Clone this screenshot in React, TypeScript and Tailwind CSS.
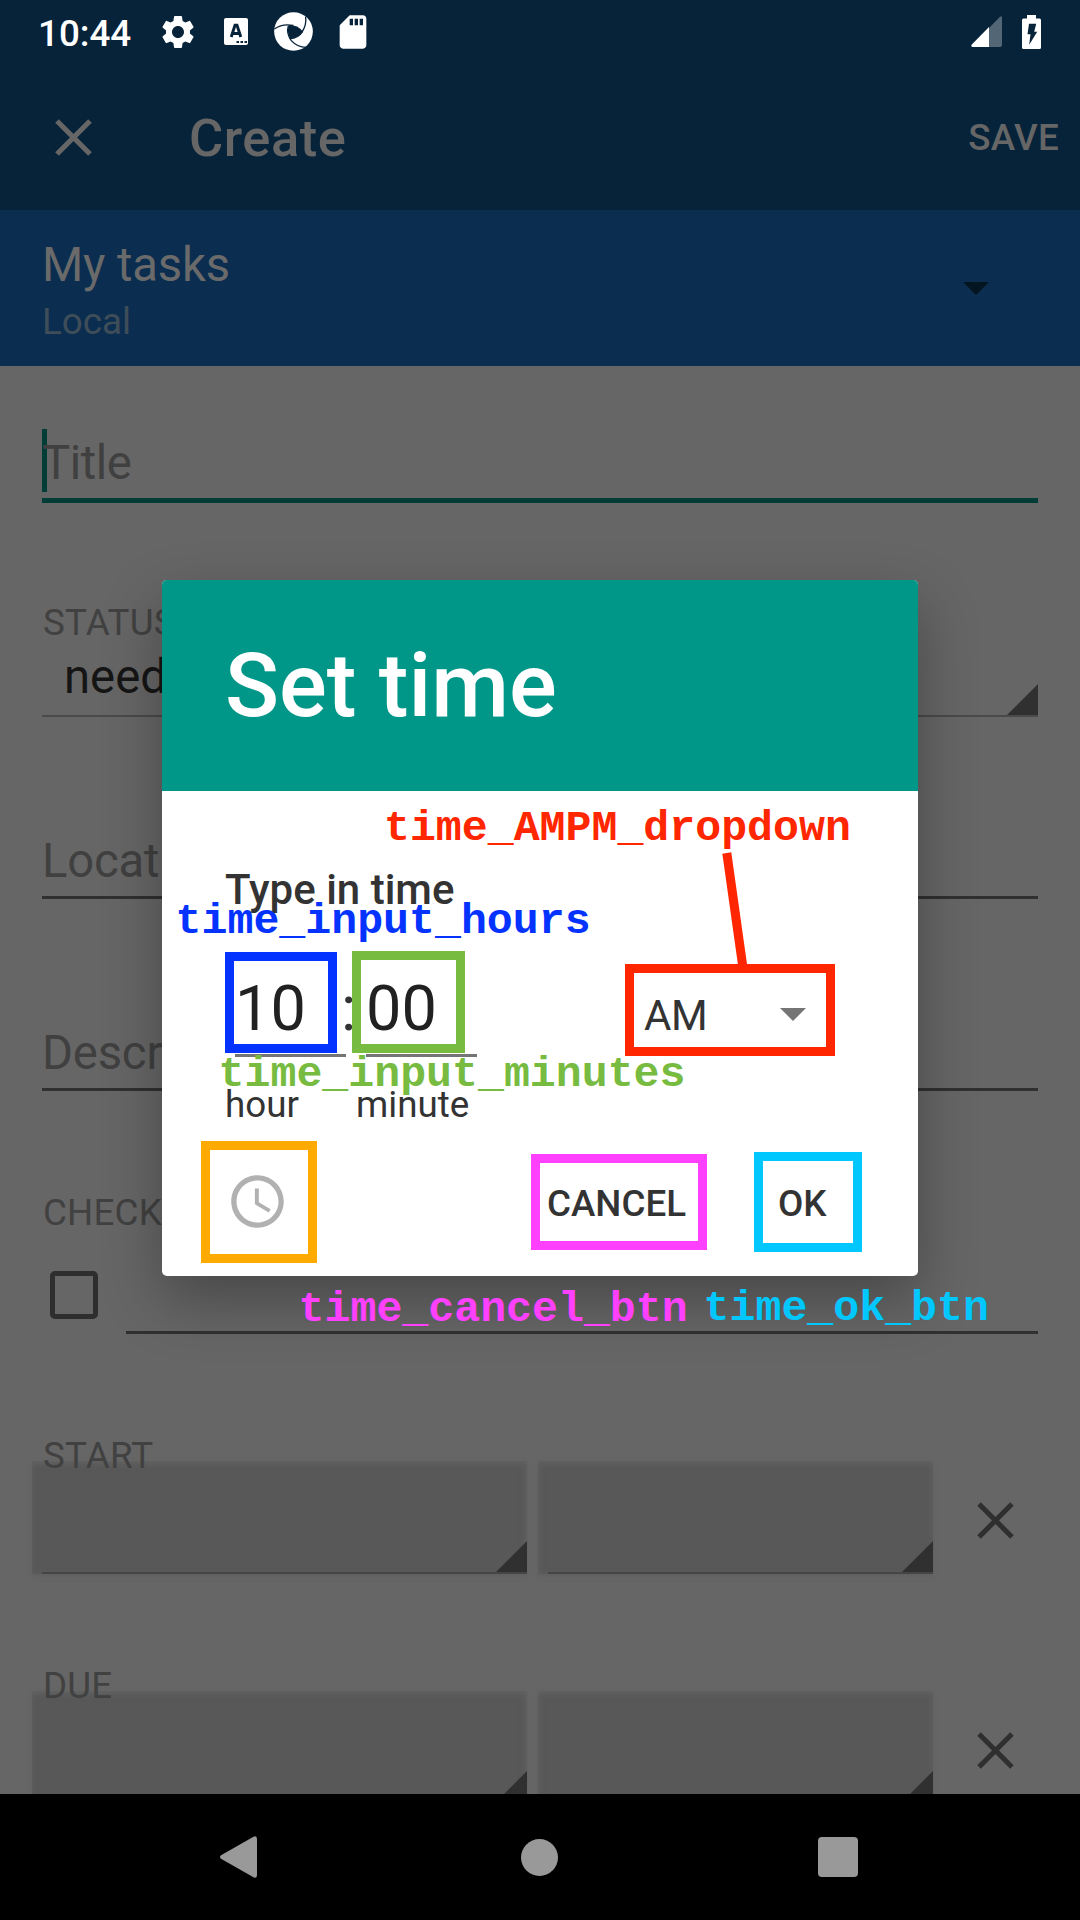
import React from "react";

function CloseIcon({ className, round }: { className: string; round?: boolean }) {
  return (
    <svg viewBox="0 0 63 63" className={className} fill="none" stroke="currentColor" strokeWidth={round ? 5 : 5.2} strokeLinecap={round ? "square" : "butt"}>
      {round ? <path d="M16.8 16.8 46.2 46.2M46.2 16.8 16.8 46.2" /> : <path d="M15 15 48 48M48 15 15 48" />}
    </svg>
  );
}

function StatusBar() {
  return (
    <div className="flex h-[63px] items-center bg-[#07233a] pl-[38px] pr-[39px] text-white">
      <span className="w-[124px] text-[36.75px] font-medium leading-[44px] pt-[4px]">10:44</span>
      <svg viewBox="0 0 24 24" className="-ml-[4px] size-[40px]" fill="currentColor">
        <path d="M19.14 12.94c.04-.3.06-.61.06-.94 0-.32-.02-.64-.07-.94l2.03-1.58c.18-.14.23-.41.12-.61l-1.92-3.32c-.12-.22-.37-.29-.59-.22l-2.39.96c-.5-.38-1.03-.7-1.62-.94l-.36-2.54c-.04-.24-.24-.41-.48-.41h-3.84c-.24 0-.43.17-.47.41l-.36 2.54c-.59.24-1.13.57-1.62.94l-2.39-.96c-.22-.08-.47 0-.59.22L2.74 8.87c-.12.21-.08.47.12.61l2.03 1.58c-.05.3-.09.63-.09.94s.02.64.07.94l-2.03 1.58c-.18.14-.23.41-.12.61l1.92 3.32c.12.22.37.29.59.22l2.39-.96c.5.38 1.03.7 1.62.94l.36 2.54c.05.24.24.41.48.41h3.84c.24 0 .44-.17.47-.41l.36-2.54c.59-.24 1.13-.56 1.62-.94l2.39.96c.22.08.47 0 .59-.22l1.92-3.32c.12-.22.07-.47-.12-.61l-2.01-1.58zM12 15.6c-1.98 0-3.6-1.62-3.6-3.6s1.62-3.6 3.6-3.6 3.6 1.62 3.6 3.6-1.62 3.6-3.6 3.6z" />
      </svg>
      <svg viewBox="0 0 24 27" className="ml-[26px] h-[27px] w-[24px]">
        <rect width="24" height="27" rx="2" fill="white" />
        <path d="M7.2 19 11 7.2h2L16.8 19M8.6 15.5h6.8" fill="none" stroke="#07233a" strokeWidth="2.9" />
        <path d="M12.5 23h2.5v2h-2.5zM16.5 23h2.5v2h-2.5zM20.5 23h2.5v2h-2.5z" fill="#07233a" />
      </svg>
      <svg viewBox="0 0 117 117" className="ml-[26px] size-[39px]">
        <circle cx="58.5" cy="58.5" r="58" fill="white" />
        <path d="M44 39Q70 38 86 58Q76 76 48 80Q38 58 44 39Z" fill="#07233a" />
        <g fill="none" stroke="#07233a" strokeWidth="4">
          <path d="M1 51Q24 34 58 40" />
          <path d="M95 14Q98 40 84 60" />
          <path d="M86 58Q74 78 47 80" />
          <path d="M43 42Q36 64 52 86Q70 106 96 106" />
        </g>
      </svg>
      <svg viewBox="0 0 24 24" className="ml-[19.5px] size-[40px]" fill="currentColor">
        <path d="M18 2h-8L4.02 8 4 20c0 1.1.9 2 2 2h12c1.1 0 2-.9 2-2V4c0-1.1-.9-2-2-2zm-6 6h-2V4h2v4zm3 0h-2V4h2v4zm3 0h-2V4h2v4z" />
      </svg>
      <svg viewBox="0 0 31 31" className="ml-auto size-[31px]">
        <path d="M29 .8Q31-.5 31 2V29Q31 31 29 31H18V12Z" fill="#536675" />
        <path d="M18 11V31H1.5Q-.5 30.5.8 28.5Z" fill="white" />
      </svg>
      <svg viewBox="0 0 19 34" className="ml-[20px] h-[34px] w-[19px]">
        <path d="M5 0h9v3.5h3.5Q19 3.5 19 5v27.5Q19 34 17.5 34h-16Q0 34 0 32.5V5Q0 3.5 1.5 3.5H5z" fill="white" />
        <path d="M7 8.8h7.2l-2 8h3L7.2 29.8l1.3-10.6h-3z" fill="#07233a" />
      </svg>
    </div>
  );
}

function Corner() {
  return <div className="size-[31px] shrink-0 self-end bg-[#303030] [clip-path:polygon(100%_0,100%_100%,0_100%)]" />;
}

function TextField({ label, className }: { label: string; className: string }) {
  return (
    <div className={className}>
      <span className="block text-[47.25px] leading-[57px] tracking-[-0.2px] text-[#404040]">{label}</span>
    </div>
  );
}

function SectionLabel({ children }: { children: string }) {
  return (
    <h3 className="relative z-[1] h-[44px] shrink-0 pl-px text-[36.75px] leading-[46px] tracking-[0.2px] text-[#414141]">{children}</h3>
  );
}

function DateRow({ label, className }: { label: string; className: string }) {
  return (
    <section className={className}>
      <SectionLabel>{label}</SectionLabel>
      <div className="-ml-[10px] -mt-[16px] flex h-[113px] w-[1048px]">
        <div className="flex w-[495px] bg-[#585858] pl-[10px] shadow-[inset_-1px_2px_6px_#646464,0_2px_4px_#606060]">
          <div className="flex flex-1 justify-end border-b-2 border-[#454545]"><Corner /></div>
        </div>
        <div className="ml-[11px] flex w-[395px] bg-[#585858] pl-[10px] shadow-[inset_0_2px_6px_#646464,0_2px_4px_#606060]">
          <div className="flex flex-1 justify-end border-b-2 border-[#454545]"><Corner /></div>
        </div>
        <CloseIcon round className="ml-[31px] mt-[28px] size-[63px] text-[#2f2f2f]" />
      </div>
    </section>
  );
}

function TaskForm() {
  return (
    <main className="isolate flex h-[1428px] flex-col overflow-hidden bg-[#666666] px-[42px]">
      <div className="relative h-[137px] shrink-0 border-b-[5px] border-[#003d36] pt-[69px]">
        <span className="absolute left-0 top-[63px] h-[63px] w-[5px] bg-[#003d36]" />
        <span className="relative block text-[47.25px] leading-[57px] tracking-[-0.5px] text-[#404040]">Title</span>
      </div>
      <div className="mt-[97px] shrink-0"><SectionLabel>STATUS</SectionLabel></div>
      <div className="mt-[5px] flex h-[68px] shrink-0 justify-between border-b-2 border-[#4a4a4a] pl-[22px]">
        <span className="text-[47.25px] leading-[57px] text-[#151515]">needs action</span>
        <Corner />
      </div>
      <TextField label="Location" className="mt-[116px] h-[66px] shrink-0 border-b-[3px] border-[#303030]" />
      <TextField label="Description" className="mt-[126px] h-[66px] shrink-0 border-b-[3px] border-[#303030]" />
      <div className="mt-[99px] shrink-0"><SectionLabel>CHECKLIST</SectionLabel></div>
      <div className="flex h-[100px] shrink-0 pl-[8px]">
        <span className="mr-[28px] mt-[37px] size-[48px] rounded-[5px] border-[5.5px] border-[#2e2e2e]" />
        <span className="flex-1 border-b-[3px] border-[#303030]" />
      </div>
      <DateRow label="START" className="mt-[99px] shrink-0" />
      <DateRow label="DUE" className="mt-[89px] shrink-0" />
    </main>
  );
}

function TimeDialog() {
  return (
    <div role="dialog" className="absolute left-[162px] top-[580px] flex h-[696px] w-[756px] flex-col overflow-hidden rounded-[5px] bg-white text-[#333333] shadow-[0_24px_60px_rgba(0,0,0,0.3)]">
      <header className="h-[211px] shrink-0 bg-[#009688] pl-[63px] pt-[54px]">
        <h2 className="text-[89.25px] font-medium leading-[104px] text-white">Set time</h2>
      </header>
      <div className="flex flex-1 flex-col px-[63px] pt-[74px]">
        <p className="text-[42px] font-medium leading-[50px]">Type in time</p>
        <div className="mt-[56px] flex h-[86px]">
          <div className="ml-[10px] w-[111px] border-b-[3px] border-[#757575] text-[63px] leading-[76px] text-[#212121]">10</div>
          <span className="-ml-[5px] w-[25px] text-[63px] leading-[76px]">:</span>
          <div className="w-[111px] border-b-[3px] border-[#757575] text-[63px] leading-[76px] text-[#212121]">00</div>
          <div className="ml-[167px] mt-[20px] flex w-[162px] justify-between">
            <span className="text-[42px] leading-[50px] tracking-[-0.5px]">AM</span>
            <span className="mt-[17px] h-[13px] w-[26px] bg-[#757575] [clip-path:polygon(0_0,100%_0,50%_100%)]" />
          </div>
        </div>
        <div className="mt-[26px] flex text-[36.75px] leading-[44px]">
          <span className="w-[131px]">hour</span>
          <span>minute</span>
        </div>
        <div className="mt-[43px] flex h-[63px] items-center pl-px">
          <svg viewBox="0 0 24 24" className="size-[63px]" fill="#b1b1b1">
            <path d="M11.99 2C6.47 2 2 6.48 2 12s4.47 10 9.99 10C17.52 22 22 17.52 22 12S17.52 2 11.99 2zM12 20c-4.42 0-8-3.58-8-8s3.58-8 8-8 8 3.58 8 8-3.58 8-8 8zM12.5 7H11v6l5.25 3.15.75-1.23-4.5-2.67z" />
          </svg>
          <span className="ml-[258px] w-[231px] pt-[4px] text-[36.75px] font-medium leading-[44px]">CANCEL</span>
          <span className="pt-[4px] text-[36.75px] font-medium leading-[44px]">OK</span>
        </div>
      </div>
    </div>
  );
}

const tag = "absolute whitespace-nowrap font-['Liberation_Mono',monospace] text-[43.22px] font-bold leading-[50px]";

function Annotations() {
  return (
    <div className="absolute inset-0">
      <div className="absolute left-[225px] top-[952px] h-[101px] w-[112px] border-[9px] border-[#0433ff]" />
      <div className="absolute left-[352px] top-[951px] h-[102px] w-[113px] border-[9px] border-[#77bb41]" />
      <div className="absolute left-[625px] top-[964px] h-[92px] w-[210px] border-[9px] border-[#ff2600]" />
      <svg viewBox="0 0 40 120" className="absolute left-[715px] top-[850px] h-[120px] w-[40px]">
        <path d="M11.8 3 28 118" stroke="#ff2600" strokeWidth="9" />
      </svg>
      <div className="absolute left-[201px] top-[1141px] h-[122px] w-[116px] border-[9px] border-[#ffaa00]" />
      <div className="absolute left-[531px] top-[1154px] h-[96px] w-[176px] border-[9px] border-[#ff40ff]" />
      <div className="absolute left-[754px] top-[1152px] h-[100px] w-[108px] border-[9px] border-[#00c8ff]" />
      <span className={`${tag} left-[384px] top-[804px] text-[#ff2600]`}>time_AMPM_dropdown</span>
      <span className={`${tag} left-[175.6px] top-[897px] text-[#0433ff]`}>time_input_hours</span>
      <span className={`${tag} left-[218.6px] top-[1050px] text-[#77bb41]`}>time_input_minutes</span>
      <span className={`${tag} left-[298.6px] top-[1285px] text-[#ff40ff]`}>time_cancel_btn</span>
      <span className={`${tag} left-[703.6px] top-[1284px] text-[#00c8ff]`}>time_ok_btn</span>
    </div>
  );
}

export default function App() {
  return (
    <div className="relative h-[1920px] w-[1080px] overflow-hidden bg-black font-['Roboto',sans-serif]">
      <StatusBar />
      <header className="flex h-[147px] items-center bg-[#07233a] pl-[42px] pr-[21px] text-[#666666]">
        <CloseIcon className="mt-[2px] size-[63px]" />
        <h1 className="ml-[84px] pt-[3px] text-[52.5px] font-medium leading-[60px] tracking-[0.5px]">Create</h1>
        <span className="ml-auto pt-[2px] text-[36.75px] font-medium leading-[44px] tracking-[0.3px]">SAVE</span>
      </header>
      <div className="flex h-[156px] justify-between bg-[#0b2e50] pl-[42px] pr-[91px] pt-[27px]">
        <div>
          <p className="text-[47.25px] leading-[57px] tracking-[-0.15px] text-[#6a6a6a]">My tasks</p>
          <p className="mt-[6px] text-[36.75px] leading-[44px] text-[#3f4d59]">Local</p>
        </div>
        <span className="mt-[45px] h-[13px] w-[26px] bg-[#041420] [clip-path:polygon(0_0,100%_0,50%_100%)]" />
      </div>
      <TaskForm />
      <nav className="flex h-[126px] items-center bg-black pl-[219px] pr-[222px] text-[#999999]">
        <svg viewBox="0 0 38 42" className="h-[42px] w-[38px]" fill="currentColor">
          <path d="M34.5.7Q38-1 38 3V39Q38 43 34.5 41.3L2 22.8Q0 21 2 19.2Z" />
        </svg>
        <span className="ml-[264px] size-[37px] rounded-full bg-[#999999]" />
        <span className="ml-auto size-[40px] rounded-[4px] bg-[#999999]" />
      </nav>
      <TimeDialog />
      <Annotations />
    </div>
  );
}
